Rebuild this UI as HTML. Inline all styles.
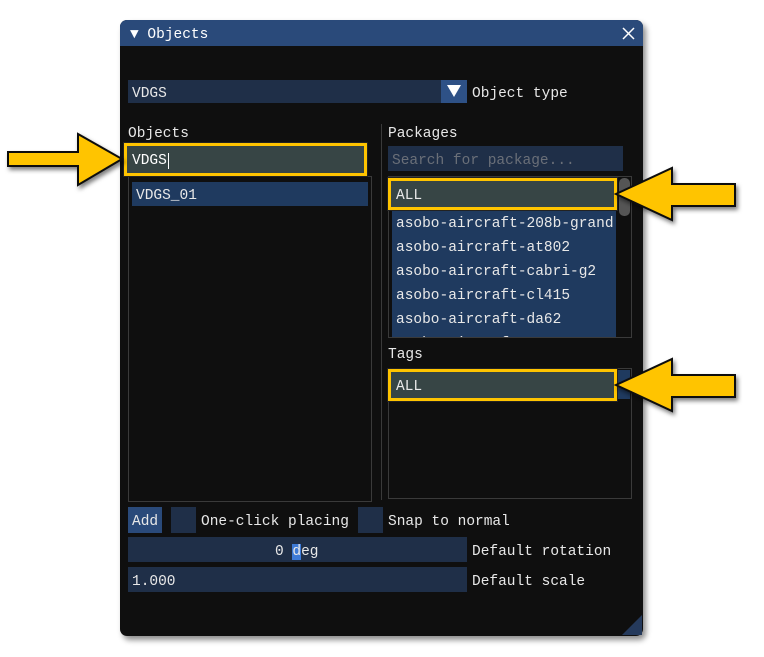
<!DOCTYPE html>
<html><head><meta charset="utf-8"><style>
*{margin:0;padding:0;box-sizing:border-box}
body{width:764px;height:657px;background:#fff;position:relative;overflow:hidden;font-family:"Liberation Mono",monospace;font-size:14.5px;color:#e8e8e8}
.a{position:absolute}
.win{left:120px;top:20px;width:523px;height:616px;background:#0f0f0f;border-radius:7px;box-shadow:3px 4px 6px rgba(0,0,0,.45);overflow:hidden}
.title{left:0;top:0;width:523px;height:26px;background:#2a4a7a}
.t{line-height:24px;white-space:pre;transform:translateY(2px)}
.in{background:#1f2f48}
.sel{background:#1f3a5f}
.box{border:1px solid #3a3a3a}
.hl{border:3px solid #ffc400;background:#374545;outline:1px solid #222}
</style></head><body>
<div class="a win">
 <div class="a title"></div>
 <div class="a t" style="left:10px;top:1px;color:#fff">▼ Objects</div>
 <svg class="a" style="left:502px;top:7px" width="13" height="13"><path d="M1 1L12 12M12 1L1 12" stroke="#fff" stroke-width="1.5"/></svg>
</div>
<div class="a in" style="left:128px;top:80px;width:313px;height:23px"></div>
<div class="a t" style="left:132px;top:80px">VDGS</div>
<div class="a" style="left:441px;top:80px;width:26px;height:23px;background:#2e5186"></div>
<svg class="a" style="left:446px;top:84px" width="16" height="14"><path d="M1 1H15L8 13Z" fill="#fff"/></svg>
<div class="a t" style="left:472px;top:80px">Object type</div>

<div class="a t" style="left:128px;top:120px">Objects</div>
<div class="a box" style="left:128px;top:176px;width:244px;height:326px"></div>
<div class="a hl" style="left:124px;top:143px;width:243px;height:33px"></div>
<div class="a t" style="left:132px;top:147px;color:#fff">VDGS<span style="border-left:1px solid #fff;margin-left:1px"></span></div>
<div class="a sel" style="left:132px;top:182px;width:236px;height:24px"></div>
<div class="a t" style="left:136px;top:182px">VDGS_01</div>

<div class="a" style="left:381px;top:124px;width:1px;height:376px;background:#3a3a3a"></div>

<div class="a t" style="left:388px;top:120px">Packages</div>
<div class="a in" style="left:388px;top:146px;width:235px;height:25px"></div>
<div class="a t" style="left:392px;top:147px;color:#6a6f78">Search for package...</div>
<div class="a box" style="left:388px;top:176px;width:244px;height:162px"></div>
<div class="a sel" style="left:392px;top:208px;width:224px;height:129px;overflow:hidden">
 <div class="t" style="padding-left:4px;padding-top:2px">asobo-aircraft-208b-grand
asobo-aircraft-at802
asobo-aircraft-cabri-g2
asobo-aircraft-cl415
asobo-aircraft-da62
asobo-aircraft-e330</div></div>
<div class="a" style="left:619px;top:178px;width:11px;height:38px;background:#555;border-radius:5px"></div>
<div class="a hl" style="left:388px;top:178px;width:229px;height:32px"></div>
<div class="a t" style="left:396px;top:182px">ALL</div>

<div class="a t" style="left:388px;top:341px">Tags</div>
<div class="a box" style="left:388px;top:368px;width:244px;height:131px"></div>
<div class="a sel" style="left:616px;top:370px;width:14px;height:29px"></div>
<div class="a hl" style="left:388px;top:369px;width:229px;height:32px"></div>
<div class="a t" style="left:396px;top:373px">ALL</div>

<div class="a" style="left:128px;top:507px;width:34px;height:26px;background:#2a4a7a"></div>
<div class="a t" style="left:132px;top:508px">Add</div>
<div class="a in" style="left:171px;top:507px;width:25px;height:26px"></div>
<div class="a t" style="left:201px;top:508px">One-click placing</div>
<div class="a in" style="left:358px;top:507px;width:25px;height:26px"></div>
<div class="a t" style="left:388px;top:508px">Snap to normal</div>

<div class="a in" style="left:128px;top:537px;width:339px;height:25px"></div>
<div class="a t" style="left:275px;top:538px">0 <span style="background:#3d7ad6">d</span>eg</div>
<div class="a t" style="left:472px;top:538px">Default rotation</div>
<div class="a in" style="left:128px;top:567px;width:339px;height:25px"></div>
<div class="a t" style="left:132px;top:568px">1.000</div>
<div class="a t" style="left:472px;top:568px">Default scale</div>
<svg class="a" style="left:622px;top:615px" width="20" height="20"><path d="M20 0V20H0Z" fill="#253a5c"/></svg>

<svg class="a" style="left:0;top:0" width="764" height="657">
<defs><filter id="s"><feDropShadow dx="2" dy="3" stdDeviation="2" flood-opacity=".5"/></filter></defs>
<g fill="#ffc400" stroke="#111" stroke-width="2" filter="url(#s)">
<path d="M8 152H78V134L122 159L78 185V166H8Z"/>
<path d="M735 184H672V168L616 194L672 220V206H735Z"/>
<path d="M735 375H672V359L616 385L672 411V397H735Z"/>
</g></svg>
</body></html>
